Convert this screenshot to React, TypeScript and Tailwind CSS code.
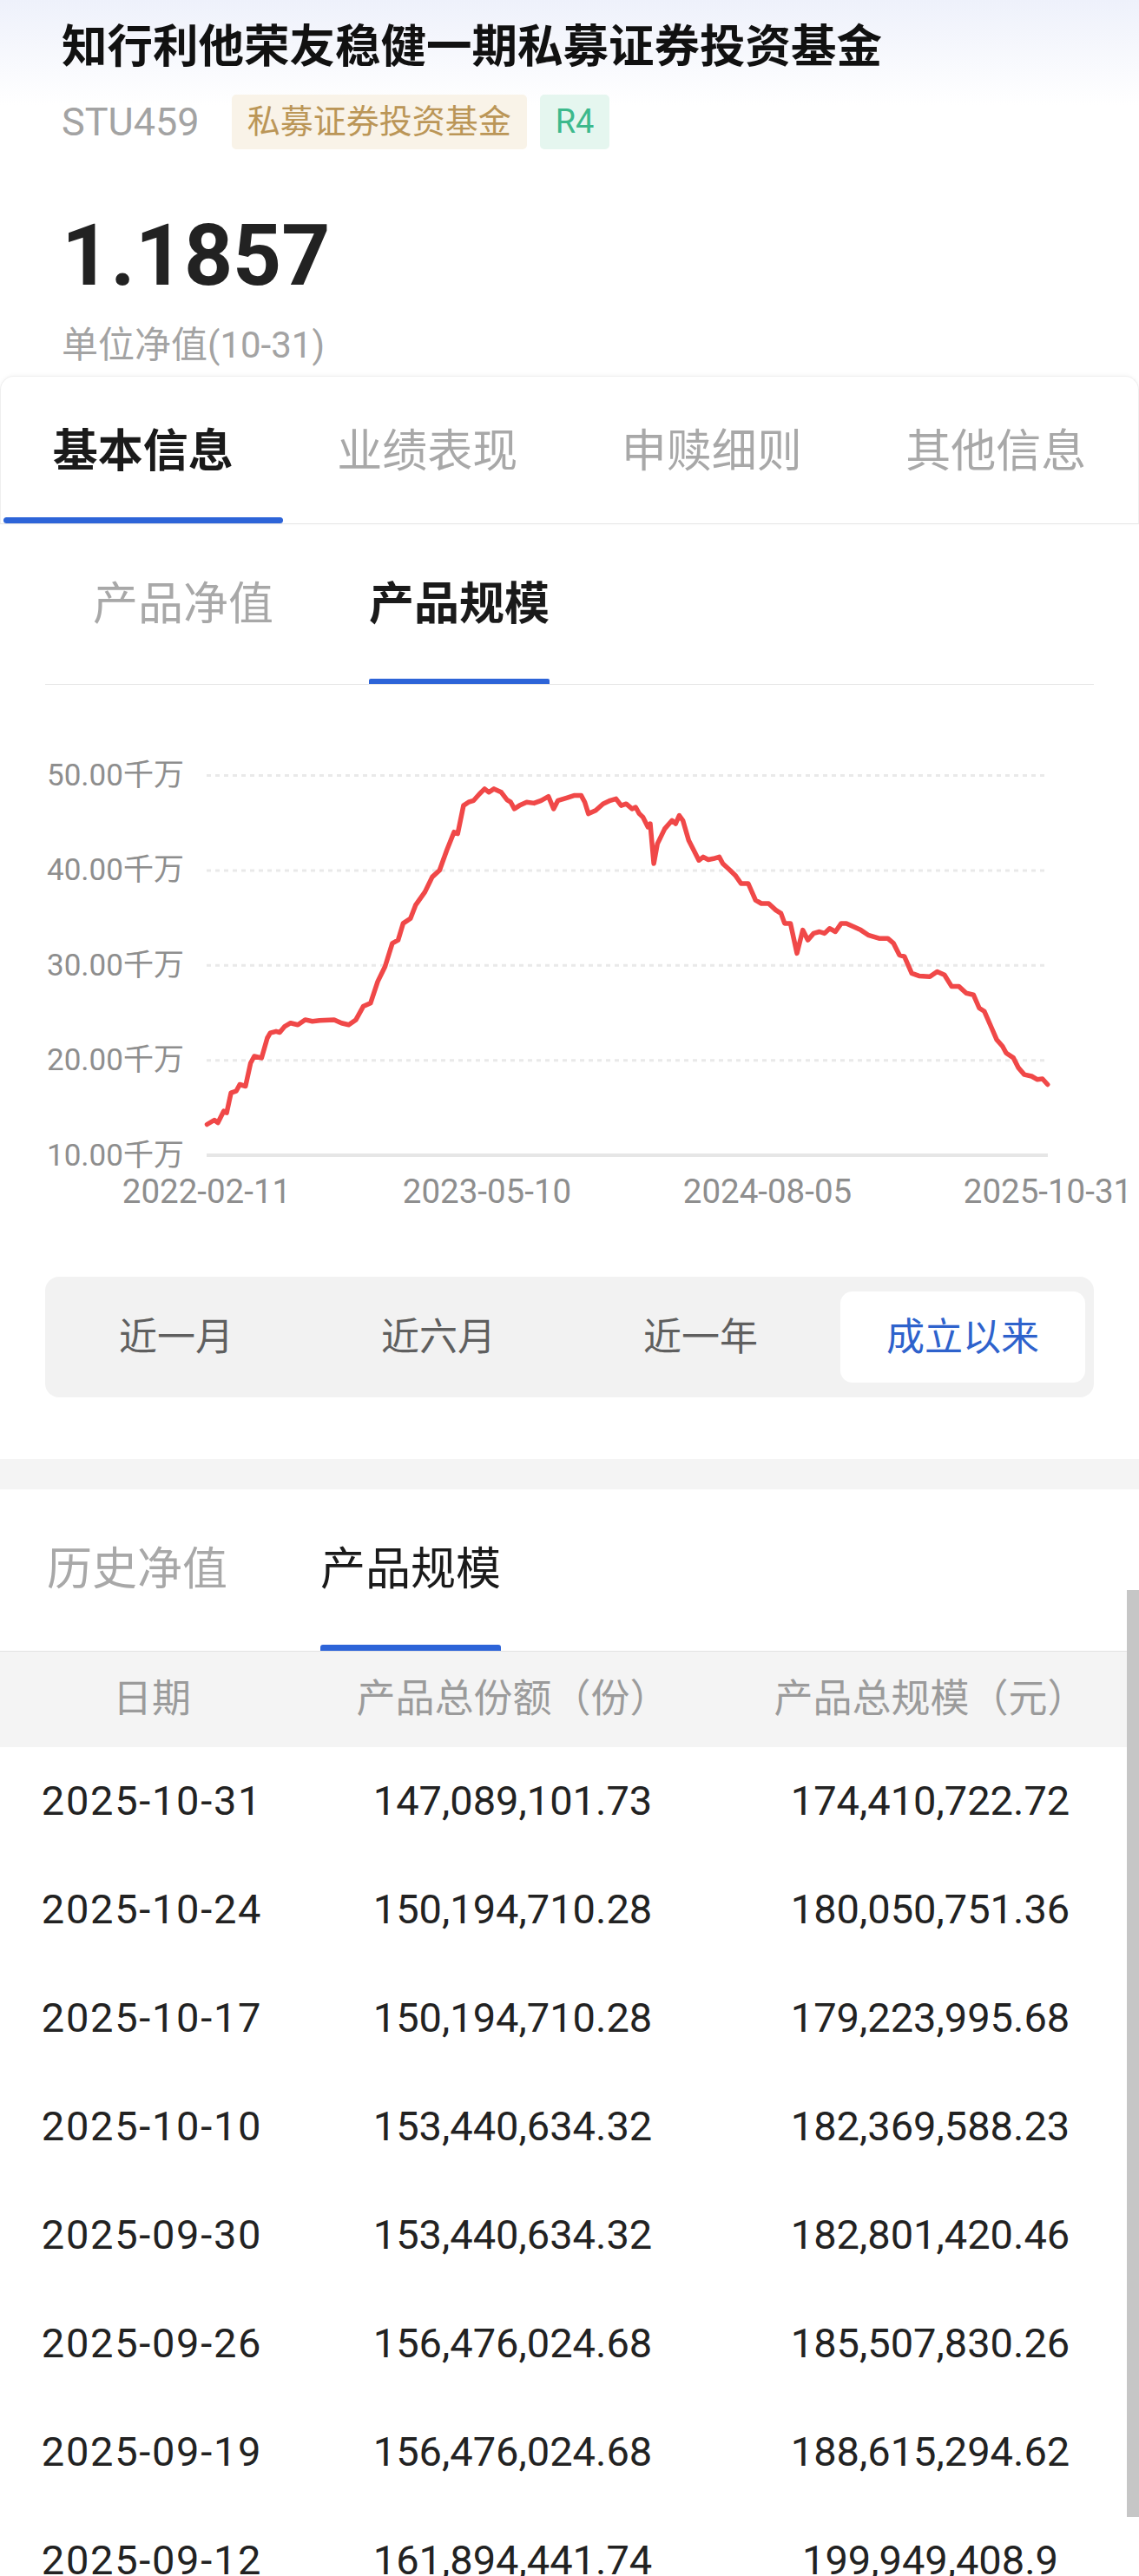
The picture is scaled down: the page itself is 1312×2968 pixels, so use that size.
import React from 'react';

const mainTabs = ['基本信息', '业绩表现', '申赎细则', '其他信息'];
const ranges = ['近一月', '近六月', '近一年', '成立以来'];

const rows: [string, string, string][] = [
  ['2025-10-31', '147,089,101.73', '174,410,722.72'],
  ['2025-10-24', '150,194,710.28', '180,050,751.36'],
  ['2025-10-17', '150,194,710.28', '179,223,995.68'],
  ['2025-10-10', '153,440,634.32', '182,369,588.23'],
  ['2025-09-30', '153,440,634.32', '182,801,420.46'],
  ['2025-09-26', '156,476,024.68', '185,507,830.26'],
  ['2025-09-19', '156,476,024.68', '188,615,294.62'],
  ['2025-09-12', '161,894,441.74', '199,949,408.9'],
  ['2025-09-05', '161,894,441.74', '201,337,120.55'],
];

// scale curve, traced at 1.195 (x) by 2.613 (y)
const trace: [number, number][] = [
  [285, 1245], [295, 1232], [300, 1240], [308, 1205], [312, 1210], [318, 1150], [325, 1145], [330, 1125],
  [338, 1130], [345, 1060], [350, 1040], [360, 1045], [368, 985], [372, 970], [380, 965], [385, 968],
  [392, 950], [400, 940], [410, 945], [420, 930], [430, 935], [440, 932], [460, 930], [470, 940],
  [480, 945], [490, 930], [500, 890], [510, 880], [520, 815], [530, 770], [540, 700], [548, 690],
  [555, 640], [565, 625], [572, 585], [585, 545], [595, 500], [605, 480], [615, 420], [625, 365],
  [630, 370], [638, 285], [645, 275], [652, 270], [660, 250], [667, 235], [673, 245], [680, 235],
  [690, 245], [698, 268], [703, 275], [708, 295], [715, 285], [725, 275], [735, 278], [745, 270],
  [755, 258], [762, 295], [768, 270], [780, 262], [790, 255], [800, 255], [805, 275], [810, 310],
  [820, 300], [830, 280], [840, 270], [848, 265], [855, 285], [862, 280], [870, 295], [875, 290],
  [880, 310], [885, 320], [892, 350], [895, 340], [900, 460], [905, 400], [915, 355], [925, 330],
  [930, 340], [935, 315], [940, 330], [948, 390], [955, 420], [962, 450], [968, 440], [975, 448],
  [982, 445], [990, 440], [995, 460], [1005, 480], [1012, 495], [1020, 520], [1030, 520], [1040, 570],
  [1048, 580], [1058, 580], [1068, 600], [1075, 610], [1080, 640], [1088, 640], [1097, 730], [1105, 660],
  [1112, 690], [1120, 670], [1128, 665], [1135, 670], [1142, 655], [1150, 665], [1158, 640], [1165, 640],
  [1175, 650], [1185, 660], [1195, 675], [1210, 685], [1222, 685], [1230, 700], [1238, 735], [1245, 740],
  [1255, 790], [1265, 798], [1280, 800], [1290, 785], [1300, 795], [1310, 830], [1320, 830], [1330, 850],
  [1340, 855], [1348, 895], [1355, 905], [1365, 955], [1372, 990], [1380, 1010], [1385, 1030], [1395, 1045],
  [1402, 1075], [1410, 1095], [1420, 1100], [1428, 1110], [1435, 1108], [1442, 1125],
];

const linePoints = trace.map(([x, y]) => `${(x / 1.195).toFixed(1)},${(y / 2.613).toFixed(1)}`).join(' ');

const yTicks = [50, 40, 30, 20, 10];
const yOf = (v: number) => 512 - (v - 10) * 10.935;
const xLabels: [number, string][] = [
  [238, '2022-02-11'],
  [561, '2023-05-10'],
  [884, '2024-08-05'],
  [1207, '2025-10-31'],
];

const ScaleChart = () => (
  <svg width="1312" height="580" className="block mt-[30px]">
    {yTicks.map((v) => (
      <g key={v}>
        <line
          x1="238" x2="1207" y1={yOf(v)} y2={yOf(v)}
          stroke={v === 10 ? '#e6e6e6' : '#e9e9e9'}
          strokeWidth={v === 10 ? 4 : 3}
          strokeDasharray={v === 10 ? undefined : '5 5'}
        />
        <text x="54" y={yOf(v)} dominantBaseline="central" fontSize="35" fill="#8e8e8e">
          {v.toFixed(2)}千万
        </text>
      </g>
    ))}
    <polyline points={linePoints} fill="none" stroke="#f04848" strokeWidth="5.5" strokeLinejoin="round" strokeLinecap="round" />
    {xLabels.map(([x, label]) => (
      <text key={label} x={x} y="553" textAnchor="middle" dominantBaseline="central" fontSize="38.5" fill="#8e8e8e">
        {label}
      </text>
    ))}
  </svg>
);

export default function App() {
  return (
    <div className="relative w-[1312px] h-[2968px] overflow-hidden bg-white font-[Roboto,'Noto_Sans_CJK_SC',sans-serif]">
      {/* header */}
      <div className="bg-[linear-gradient(180deg,#eef1fb_0%,#ffffff_28%)] px-[71px] pt-[20px] pb-[7px]">
        <h1 className="text-[52.5px] leading-[68px] font-bold text-[#111]">知行利他荣友稳健一期私募证券投资基金</h1>
        <div className="mt-[21px] flex items-center">
          <span className="text-[45px] leading-none text-[#a3a3a3] mr-[37px]">STU459</span>
          <span className="h-[63px] px-[18px] flex items-center rounded-[5px] bg-[#f9f3e8] text-[38px] text-[#bb9657]">私募证券投资基金</span>
          <span className="ml-[15px] h-[63px] px-[18px] flex items-center rounded-[5px] bg-[#e5f6ef] text-[38px] text-[#3db98c]">R4</span>
        </div>
        <div className="mt-[74px] text-[98px] leading-[98px] font-bold text-[#222]">1.1857</div>
        <div className="mt-[26px] text-[42px] leading-[56px] text-[#a3a3a3]">单位净值(10-31)</div>
      </div>

      {/* main tabs */}
      <div className="rounded-t-[16px] border border-[#efefef] border-b-[#e6e6e6] shadow-[0_-1px_4px_rgba(0,0,0,0.04)] grid grid-cols-4 pt-[53px]">
        {mainTabs.map((t, i) => (
          <div key={t} className="flex flex-col items-center">
            <span className={`text-[52px] leading-[68px] ${i === 0 ? 'font-bold text-[#1a1a1a]' : 'text-[#a8a8a8]'}`}>{t}</span>
            <span className={`mt-[41px] self-stretch mx-[3px] h-[7px] rounded-full ${i === 0 ? 'bg-[#2d64d8]' : 'bg-transparent'}`} />
          </div>
        ))}
      </div>

      {/* sub tabs */}
      <div className="mx-[52px] pt-[60px] flex border-b border-[#e5e5e5]">
        {['产品净值', '产品规模'].map((t, i) => (
          <div key={t} className="px-[55px] flex flex-col items-stretch">
            <span className={`text-[52px] leading-[66px] ${i === 1 ? 'font-bold text-[#1a1a1a]' : 'text-[#a8a8a8]'}`}>{t}</span>
            <span className={`mt-[52px] h-[6px] rounded-t-[2px] ${i === 1 ? 'bg-[#2d64d8]' : 'bg-transparent'}`} />
          </div>
        ))}
      </div>

      <ScaleChart />

      {/* range selector */}
      <div className="mx-[52px] mt-[72px] h-[139px] rounded-[16px] bg-[#f2f2f2] grid grid-cols-4">
        {ranges.map((r, i) => (
          <div
            key={r}
            className={`my-[17px] mx-[10px] rounded-[14px] flex items-center justify-center text-[44px] ${i === 3 ? 'bg-white text-[#2e62cc]' : 'text-[#5f5f5f]'}`}
          >
            {r}
          </div>
        ))}
      </div>

      <div className="mt-[71px] h-[35px] bg-[#f4f4f4]" />

      {/* history tabs */}
      <div className="pl-[54px] pt-[59px] flex gap-[107px] border-b border-[#e2e2e2]">
        {['历史净值', '产品规模'].map((t, i) => (
          <div key={t} className="flex flex-col">
            <span className={`text-[52px] leading-[68px] ${i === 1 ? 'text-[#1a1a1a]' : 'text-[#a8a8a8]'}`}>{t}</span>
            <span className={`mt-[52px] h-[7px] rounded-t-[3px] ${i === 1 ? 'bg-[#2d64d8]' : 'bg-transparent'}`} />
          </div>
        ))}
      </div>

      {/* table */}
      <div className="grid grid-cols-[350px_1fr_1fr] h-[110px] items-center bg-[#f4f4f4] text-[45px] text-[#9b9b9b] text-center">
        <span>日期</span>
        <span>产品总份额（份）</span>
        <span>产品总规模（元）</span>
      </div>
      {rows.map(([d, share, size]) => (
        <div key={d} className="grid grid-cols-[350px_1fr_1fr] h-[125px] items-center text-[47px] text-[#222] text-center">
          <span className="tracking-[1.7px]">{d}</span>
          <span>{share}</span>
          <span>{size}</span>
        </div>
      ))}

      {/* scrollbar */}
      <div className="absolute right-0 top-[1832px] w-[14px] h-[1068px] bg-[#c6c6c6]" />
    </div>
  );
}
